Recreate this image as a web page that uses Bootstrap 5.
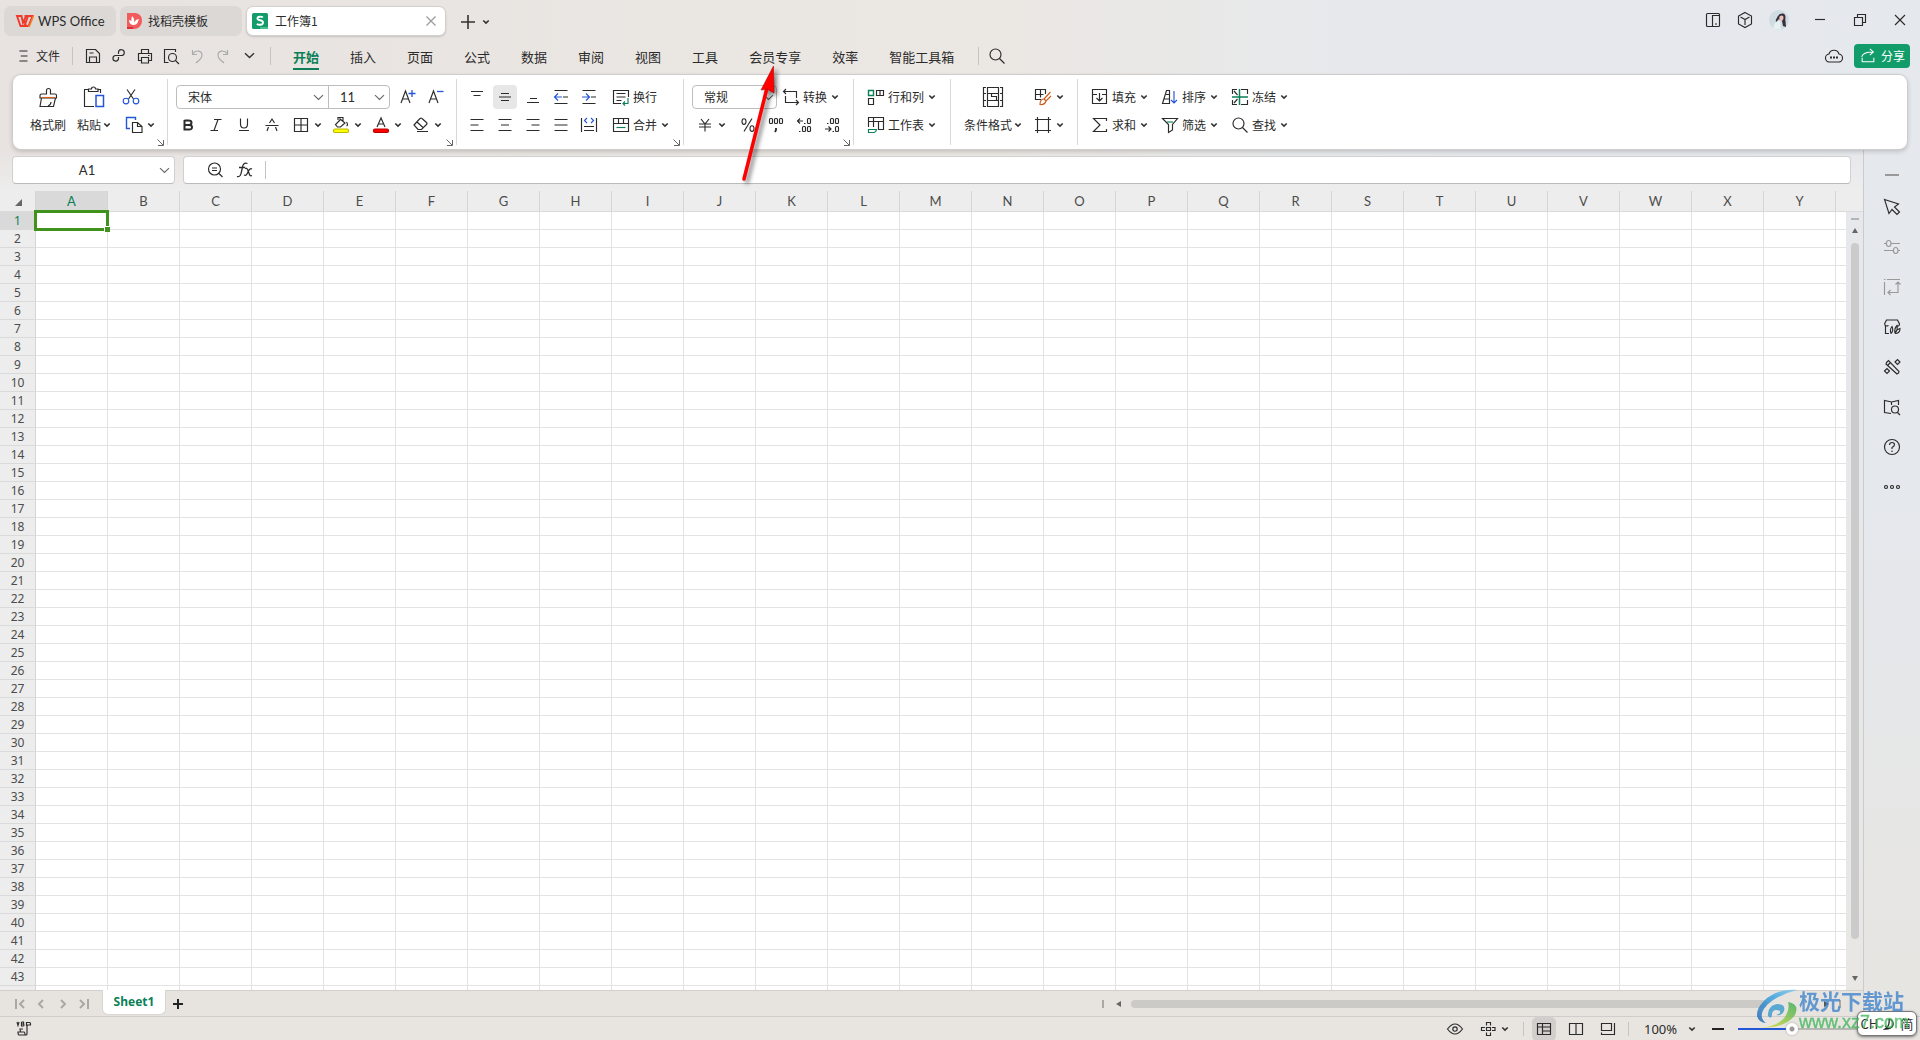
<!DOCTYPE html>
<html lang="zh-CN">
<head>
<meta charset="utf-8">
<meta name="viewport" content="width=device-width, initial-scale=1">
<title>工作簿1 - WPS Office</title>
<link href="https://cdn.jsdelivr.net/npm/bootstrap@5.3.0/dist/css/bootstrap.min.css" rel="stylesheet">
<style>
:root{--ink:#2b2b2b;--green:#0b7f57;--blue:#2456d8}
body{font:12px/16px "Noto Sans CJK SC",sans-serif;color:var(--ink);background:linear-gradient(90deg,#e8e3e0,#ebe7e3 52%,#e8e9ea 66%,#e6e8ed 76%,#e5e8ec)}
button{font:inherit;color:inherit;background:none;border:0;padding:0}
svg{display:block;flex:none}
.titlebar,.menubar,.ribbon,.statusbar,.fxbar,.sheetbar{flex-shrink:0}
main{flex:1 1 0;min-height:0}
.sheetrow{flex:1 1 0;min-height:0}
.ic{width:20px;height:20px;fill:none;stroke:var(--ink);stroke-width:1.15}
.caret{width:8px;height:8px;fill:none;stroke:#333;stroke-width:1.7}
.chev{width:11px;height:11px;fill:none;stroke:#666;stroke-width:1.1}
.titlebar{height:37px;padding:6px 0 0 4px}
.doctab{height:30px;border-radius:7px;background:#dcd8d5;font-size:12px;text-decoration:none;color:var(--ink)}
.latin{font-family:Lato,"Noto Sans CJK SC",sans-serif;font-size:13px}
.doctab.current{background:#fff;border:1px solid #d3d0ce;box-shadow:0 1px 2px rgba(0,0,0,.15)}
.winbtn{width:40px;height:28px}
.winbtn.avatar{width:36px;margin-right:3px}
.toolbtn{width:32px;height:28px}
.menubar{height:37px}
.qbtn{width:26px;height:26px}
.vsep{width:1px;height:18px;background:#c6c3c1}
.filebtn{width:72px;padding-left:14px;margin-right:0}
.filebtn+.vsep{margin-right:7px}
.menu-tabs{gap:31px;font-size:13px;line-height:20px;margin-left:22px}
.menu-tabs a{color:var(--ink);text-decoration:none;padding:5px 0 1px;border-bottom:2px solid transparent}
.menu-tabs a.current{color:var(--green);font-weight:700;border-color:var(--green)}
.cloud{margin-right:10px}
.share{width:56px;height:24px;margin-right:10px;border-radius:4px;background:#119c6a;color:#fff}
.ribbon{margin:0 12px;height:76px;background:#fff;border:1px solid #cfcdcc;border-radius:9px;box-shadow:0 2px 4px rgba(0,0,0,.16);z-index:2}
.rgroup{padding:8px 0 0 8px;position:relative}
.rgroup::after{content:"";position:absolute;right:0;top:4px;height:66px;width:1px;background:#d8d8d8}
.rgroup.tight{padding-left:6px}
.rgroup:last-child::after{display:none}
.rrow{height:28px}
.ibtn{width:28px;height:24px;border-radius:4px}
.ibtn.on{width:24px;margin:0 2px;background:#e7e7e7}
.split{width:40px;height:24px;gap:0}
.split .icbox{width:26px}
.tbtn{height:24px;padding-left:4px;gap:2px;white-space:nowrap}
.tbtn .caret{margin-left:2px}
.bigbtn{height:56px;width:46px;white-space:nowrap}
.bigbtn.wide{width:68px}
.bigbtn .pic{height:28px}
.bigbtn .cap{height:28px;gap:2px}
.launch{position:absolute;right:4px;bottom:3px;width:7px;height:7px;fill:none;stroke:#666}
.pick{position:relative}
.pick select{appearance:none;width:100%;height:24px;border:1px solid #bdbdbd;border-radius:4px;background:#fff;padding:0 0 0 11px;font:12px/20px "Noto Sans CJK SC",sans-serif;color:var(--ink)}
.pick svg{position:absolute;right:5px;top:7px;pointer-events:none}
.pick.fname{width:153px;margin-left:2px}
.pick.fname select{border-radius:4px 0 0 4px}
.pick.fsize{width:62px;margin-left:-1px}
.pick.fsize select{border-radius:0 4px 4px 0;font-family:Lato,sans-serif;font-size:13px}
.pick.fnum{width:85px}
.pick.fnum svg{right:3px}
.fxbar{height:41px;padding:6px 12px 6px 12px;gap:8px;background:linear-gradient(180deg,rgba(237,237,237,0),#ededed)}
.fbox{background:#fff;border:1px solid #d0d0d0;border-bottom-color:#bbb;border-radius:4px;height:28px}
.fbox input{border:0;outline:0;background:none;min-width:0;font:13px Lato,sans-serif;color:var(--ink)}
.sheetwrap{overflow:hidden;position:relative;background:#fff}
.gridtable{table-layout:fixed;border-collapse:separate;border-spacing:0;width:1908px;line-height:17px;color:#4c4c4c}
.gridtable th{font:13px/17px Lato,sans-serif;text-align:center;padding:0;background:#ededed;border-right:1px solid #d5d5d5;border-bottom:1px solid #dadada}
.gridtable thead th{height:21px;line-height:20px}
.gridtable tbody th{font:12px/17px "Noto Sans",sans-serif;height:18px}
.gridtable td{height:18px;padding:0;border-right:1px solid #e3e3e3;border-bottom:1px solid #e3e3e3;position:relative}
.gridtable th.hot{background:#d9d9d9;color:var(--green)}
.gridtable td.cursor::before{content:"";position:absolute;inset:-2px;border:3px solid #41911d;z-index:1}
.gridtable td.cursor::after{content:"";position:absolute;right:-3px;bottom:-3px;width:6px;height:6px;background:#41911d;border:solid #fff;border-width:1px 0 0 1px;z-index:2}
.vscroll{width:17px;padding:6px 0 7px}
.vcol{background:linear-gradient(180deg,#e6e8ec,#e8e7e4)}
.vhead{height:21px;background:#ededed;border-bottom:1px solid #dadada}
.vthumb{width:8px;margin:7px 0 36px;background:#cbcbcb;border-radius:4px}
.sidebar{width:57px;border-left:1px solid #c9cbce;background:linear-gradient(180deg,#e5e8ed,#e5e8ed 40%,#e7e5e1);padding-top:13px}
.sidebar button{height:40px;width:56px}
.sidebar .fold{height:26px}
.sheetbar{height:26px;background:#e7e4e0;border-top:1px solid #d2d0cd}
.sheetbar .nav-b{width:22px;height:24px}
.sheettab{margin-top:-1px;height:25px;width:64px;background:#fff;border-radius:0 0 6px 6px;border:1px solid #d8d5d2;border-top:0;color:var(--green);font:700 12px/24px "Noto Sans",sans-serif;text-align:center;text-decoration:none}
.hscroll{width:41%}
.hthumb{height:8px;margin-right:56px;background:#cccac7;border-radius:4px}
.statusbar{height:24px;background:#e8e5e1;border-top:1px solid #cfcccb;padding:0 10px 0 10px}
.statusbar .vsep{height:14px}
.stbtn{width:24px;height:24px;border-radius:5px}
.stbtn.on{background:#d1cecb}
.zoomv{width:56px;margin-left:11px;font:13px "Noto Sans",sans-serif;padding-left:4px}
.zslide{appearance:none;width:138px;height:12px;margin:0 6px;background:linear-gradient(#2456d8,#2456d8) 0 5px/53px 2px no-repeat,linear-gradient(#b9b7b5,#b9b7b5) 0 5px/100% 2px no-repeat}
.zslide::-webkit-slider-thumb{appearance:none;width:12px;height:12px;border-radius:50%;background:radial-gradient(#999 0 2px,#fff 3px);box-shadow:0 0 2px #888}
.callout{position:absolute;left:730px;top:56px;z-index:5;pointer-events:none;filter:drop-shadow(3px 3px 2px rgba(0,0,0,.5))}
.ime{position:absolute;right:3px;bottom:4px;width:60px;height:25px;border-radius:6px;background:#fff;border:1px solid #777;box-shadow:0 1px 3px rgba(0,0,0,.5);font:13px/22px "Noto Sans CJK SC",sans-serif;z-index:6}
.wmark{position:absolute;right:11px;bottom:8px;z-index:7;pointer-events:none;opacity:.78}
.wmark .cn{font:700 21px/24px "Noto Sans CJK SC",sans-serif;color:#3d83cb}
.wmark .en{font:18px/20px "Liberation Sans",sans-serif;-webkit-text-stroke:.4px #3fb558;color:#3fb558}
</style>
<script src="https://cdn.jsdelivr.net/npm/bootstrap@5.3.0/dist/js/bootstrap.bundle.min.js"></script>
</head>
<body>
<svg width="0" height="0" class="position-absolute" aria-hidden="true"><defs>
<symbol id="caret" viewBox="0 0 8 8"><path d="M1.3 2.5 4 5l2.7-2.5"/></symbol>
<symbol id="chev" viewBox="0 0 11 11"><path d="M1 3.2 5.5 7.5 10 3.2"/></symbol>
<symbol id="launch" viewBox="0 0 7 7"><path d="M.5.5 6 6M6.500 1v5.500H1"/></symbol>
<symbol id="mag" viewBox="0 0 20 20"><circle cx="8.500" cy="8.500" r="5.500"/><path d="m12.500 12.500 5 5"/></symbol>
<symbol id="al" viewBox="0 0 20 20"><path d="M3.500 4.500h13M3.500 10h8M3.500 15.500h13"/></symbol>
<symbol id="ac" viewBox="0 0 20 20"><path d="M3.500 4.500h13M6 10h8M3.500 15.500h13"/></symbol>
<symbol id="ar" viewBox="0 0 20 20"><path d="M3.500 4.500h13M8.500 10h8M3.500 15.500h13"/></symbol>
<symbol id="aj" viewBox="0 0 20 20"><path d="M3.500 4.500h13M3.500 10h13M3.500 15.500h13"/></symbol>
</defs></svg>
<div class="d-flex flex-column vh-100 overflow-hidden position-relative">

<header class="titlebar d-flex">
  <a href="#" class="doctab latin d-flex align-items-center me-1" style="width:112px"><svg class="ms-2" width="26" height="20" viewBox="0 0 26 20"><path d="M5 5h4.500l1.500 7 3-7h2l-3.500 10h-4zM12 9l2 6h2.500l4-10H12.500" fill="none" stroke="#f13a2b" stroke-width="1.900"/><path d="M16 15h1.500l4-10" fill="none" stroke="#f78322" stroke-width="1.500"/></svg>WPS Office</a>
  <a href="#" class="doctab d-flex align-items-center me-1" style="width:122px"><svg class="ms-1 me-1" width="20" height="20" viewBox="0 0 20 20"><path d="M3 2h8a7 7 0 0 1 7 7v1a8 8 0 0 1-8 8H3z" fill="#f25a5c"/><path d="M3 16h6v2H3z" fill="#d92f3b"/><path d="M10 14c-3-2-3-5-2-9 2 2 3 4 2 9m0 0c-3 0-5-2-5-5 3 1 5 2 5 5m0 0c3 0 4-3 5-6-3 0-5 3-5 6" fill="#fff"/></svg>找稻壳模板</a>
  <a href="#" class="doctab current d-flex align-items-center" style="width:200px"><svg class="ms-1 me-1" width="20" height="18" viewBox="0 0 20 18"><rect x="1" y="1" width="16" height="16" rx="1.500" fill="#119c6a"/><path d="M9 15h8v2H9z" fill="#45c08e"/><path d="M11.800 5.500C11 4.500 6.500 4 6.500 6.500S12 7.500 12 10.500s-5 2.700-6 1.200" fill="none" stroke="#fff" stroke-width="1.900"/></svg>工作簿1<svg class="ms-auto me-2" width="12" height="12" viewBox="0 0 12 12" stroke="#999" stroke-width="1.200"><path d="m1.500 1.500 9 9m0-9-9 9"/></svg></a>
  <button class="d-flex align-items-center ms-2 ps-1" aria-label="新建"><svg width="20" height="20" viewBox="0 0 20 20" stroke="#333" stroke-width="1.600"><path d="M3 10h14M10 3v14"/></svg></button>
  <button class="d-flex align-items-center ms-1" aria-label="标签列表"><svg class="caret"><use href="#caret"/></svg></button>
  <div class="ms-auto d-flex">
    <button class="toolbtn d-flex align-items-center justify-content-center" aria-label="侧栏"><svg class="ic" viewBox="0 0 20 20"><rect x="3.500" y="3.500" width="13" height="13" rx="1"/><path d="M9.500 16V5.500h7M12 14h2"/></svg></button>
    <button class="toolbtn d-flex align-items-center justify-content-center" aria-label="应用"><svg class="ic" viewBox="0 0 20 20"><path d="M10 2.500 16.500 6v8L10 17.500 3.500 14V6zM5.500 7 10 9.500 14.500 7M10 9.500V15"/></svg></button>
    <button class="winbtn avatar d-flex align-items-center justify-content-center" aria-label="账户"><svg width="20" height="20" viewBox="0 0 20 20"><circle cx="10" cy="10" r="10" fill="#cfdde2"/><path d="M5 19c-1-5 2-8 6-8l1 8.500z" fill="#e7f1f2"/><path d="M8 8c1-4 6-6 8-3 1 2 0 4 .5 6l.5 6-3-1-1-5-3-2-3 3c-.5-2 0-3 1-4" fill="#3a2e3c"/><path d="M10.500 6.500c2-2 4-1 4 1s-1 3.500-2.500 3.500-2-2-1.500-4.500" fill="#e8c4b8"/></svg></button>
    <button class="winbtn d-flex align-items-center justify-content-center" aria-label="最小化"><svg class="ic" viewBox="0 0 20 20"><path d="M5 9.500h10"/></svg></button>
    <button class="winbtn d-flex align-items-center justify-content-center" aria-label="还原"><svg class="ic" viewBox="0 0 20 20"><path d="M4.500 7.500h8v8h-8zM7.500 7.500v-3h8v8h-3"/></svg></button>
    <button class="winbtn d-flex align-items-center justify-content-center" aria-label="关闭"><svg class="ic" viewBox="0 0 20 20"><path d="m5 5 10 10M15 5 5 15"/></svg></button>
  </div>
</header>

<nav class="menubar d-flex align-items-center">
  <button class="filebtn d-flex align-items-center"><svg class="ic me-1" style="width:18px" viewBox="0 0 20 20"><path d="M6 4.500h9M7.500 10H15M6 15.500h9"/></svg>文件</button>
  <span class="vsep"></span>
  <button class="qbtn d-flex align-items-center justify-content-center" aria-label="保存"><svg class="ic" viewBox="0 0 20 20"><path d="M3.500 3.500h9l4 4v9h-13zM6.500 16v-5h7v5M6.500 7h4"/></svg></button>
  <button class="qbtn d-flex align-items-center justify-content-center" aria-label="输出"><svg class="ic" viewBox="0 0 20 20"><path d="M9.500 8V6.300A2.900 2.900 0 1 1 12.400 9.500H8M8 9.500H6.500a2.800 2.800 0 1 0 3 3.200V11"/></svg></button>
  <button class="qbtn d-flex align-items-center justify-content-center" aria-label="打印"><svg class="ic" viewBox="0 0 20 20"><path d="M6.500 7V3.500h7V7M6 14.500H3.500v-7h13v7H14M6.500 11.500h7v5.500h-7zM13 9.500h1.500"/></svg></button>
  <button class="qbtn d-flex align-items-center justify-content-center" aria-label="预览"><svg class="ic" viewBox="0 0 20 20"><path d="M14.500 6V3.500h-11v13h4M14.500 14.500l3.500 3.500"/><circle cx="11.500" cy="11.500" r="4"/></svg></button>
  <button class="qbtn d-flex align-items-center justify-content-center" aria-label="撤销"><svg class="ic" style="stroke:#aaa" viewBox="0 0 20 20"><path d="M5.500 4v4.500H10M5.500 8C9 3 15 5 15 9s-4 6-6 8"/></svg></button>
  <button class="qbtn d-flex align-items-center justify-content-center" aria-label="恢复"><svg class="ic" style="stroke:#aaa" viewBox="0 0 20 20"><path d="M14.500 4v4.500H10M14.500 8C11 3 5 5 5 9s4 6 6 8"/></svg></button>
  <button class="qbtn d-flex align-items-center justify-content-center" aria-label="更多"><svg class="chev" style="stroke:#333;stroke-width:1.400"><use href="#chev"/></svg></button>
  <span class="vsep ms-2"></span>
  <div class="menu-tabs d-flex">
    <a href="#" class="current">开始</a><a href="#">插入</a><a href="#">页面</a><a href="#">公式</a><a href="#">数据</a><a href="#">审阅</a><a href="#">视图</a><a href="#">工具</a><a href="#">会员专享</a><a href="#">效率</a><a href="#">智能工具箱</a>
  </div>
  <span class="vsep ms-4"></span>
  <button class="d-flex ms-2" aria-label="搜索"><svg class="ic"><use href="#mag"/></svg></button>
  <button class="cloud d-flex ms-auto" aria-label="云同步"><svg class="ic" viewBox="0 0 20 20"><path d="M6 16a4 4 0 0 1-1-8 5.200 5.200 0 0 1 10 0 4 4 0 0 1-1 8z"/><path d="M6 11.500h2m1 0h2m1 0h2" stroke-width="1.800"/></svg></button>
  <button class="share d-flex align-items-center justify-content-center"><svg class="ic me-1" style="stroke:#fff;width:18px" viewBox="0 0 20 20"><path d="M3 11c1-4 5-5.500 12-5.500M12 2l4 3.500L12 9M3.500 12v4.500h13V12"/></svg>分享</button>
</nav>

<section class="ribbon d-flex position-relative">
  <div class="rgroup d-flex" style="width:155px;padding-left:12px">
    <button class="bigbtn"><span class="pic d-flex align-items-center justify-content-center"><svg class="ic" style="width:22px;height:22px" viewBox="0 0 22 22"><path d="M9.500 8V4.500a2 2 0 1 1 4 0V8h4.500q1.500 0 1.500 1.500V12H3V9.500Q3 8 4.500 8zM4.500 12 3 20.500h13.500l2-8.500M11 20q3-1 3-4"/><path d="M5 11.500h13" stroke="#d2601e"/></svg></span><span class="cap d-flex align-items-center justify-content-center">格式刷</span></button>
    <button class="bigbtn"><span class="pic d-flex align-items-center justify-content-center"><svg class="ic" style="width:22px;height:22px" viewBox="0 0 22 22"><path d="M6 3.500H1.500v17H11M14.500 3.500h3V7M5.500 5.500V3h3q0-2 2-2t2 2H15v2.500z"/><path d="M13 9.500h7.500v11H13z" stroke="#2456d8" stroke-width="1.500"/></svg></span><span class="cap d-flex align-items-center justify-content-center">粘贴<svg class="caret"><use href="#caret"/></svg></span></button>
    <div>
      <div class="rrow d-flex align-items-center"><button class="ibtn d-flex align-items-center justify-content-center" aria-label="剪切"><svg class="ic" viewBox="0 0 20 20"><path d="M6 2.500 12.500 12M14 2.500 7.500 12"/><g stroke="#2456d8"><circle cx="5" cy="14" r="2.800"/><circle cx="15" cy="14" r="2.800"/></g></svg></button></div>
      <div class="rrow d-flex align-items-center"><button class="split d-flex align-items-center" aria-label="复制"><span class="icbox d-flex justify-content-center ms-1"><svg class="ic" viewBox="0 0 20 20"><path d="M8.500 7.500h5l4.500 4v6H8.500zM13.500 8v3.500H18"/><path d="M6 13.500H2.500v-11h9V5" stroke="#2456d8" stroke-width="1.400"/></svg></span><svg class="caret"><use href="#caret"/></svg></button></div>
    </div>
    <svg class="launch"><use href="#launch"/></svg>
  </div>

  <div class="rgroup tight" style="width:289px">
    <div class="rrow d-flex align-items-center">
      <div class="pick fname"><select aria-label="字体"><option>宋体</option></select><svg class="chev"><use href="#chev"/></svg></div>
      <div class="pick fsize me-1"><select aria-label="字号"><option>11</option></select><svg class="chev"><use href="#chev"/></svg></div>
      <button class="ibtn d-flex align-items-center justify-content-center" aria-label="增大字号"><svg class="ic" viewBox="0 0 20 20"><path d="m3 16 4.500-12L12 16M4.500 12h6"/><path d="M10.500 6.500h7M14 3v7" stroke="#2456d8" stroke-width="1.300"/></svg></button>
      <button class="ibtn d-flex align-items-center justify-content-center" aria-label="减小字号"><svg class="ic" viewBox="0 0 20 20"><path d="m3 16 4.500-12L12 16M4.500 12h6"/><path d="M11 4.500h6.500" stroke="#2456d8" stroke-width="1.300"/></svg></button>
    </div>
    <div class="rrow d-flex align-items-center">
      <button class="ibtn d-flex align-items-center justify-content-center" aria-label="加粗"><svg class="ic" style="stroke-width:2" viewBox="0 0 20 20"><path d="M6.500 5.500h4q3 0 3 2.200t-3 2.300h-4M6.500 10h4.500q3 0 3 2.300t-3 2.200H6.500zM6.500 5v10"/></svg></button>
      <button class="ibtn d-flex align-items-center justify-content-center" aria-label="倾斜"><svg class="ic" viewBox="0 0 20 20"><path d="M8 4.500h7.500M4.500 15.500H12M12 4.500l-4 11"/></svg></button>
      <button class="ibtn d-flex align-items-center justify-content-center" aria-label="下划线"><svg class="ic" viewBox="0 0 20 20"><path d="M6.500 3.500V9q0 4 3.500 4t3.500-4V3.500M5 15.500h10"/></svg></button>
      <button class="ibtn d-flex align-items-center justify-content-center" aria-label="删除线"><svg class="ic" viewBox="0 0 20 20"><path d="M7.500 8 10 4l2.500 4M3.500 10.500h13M6.500 12 5 16M13.500 12l1.500 4"/></svg></button>
      <button class="split d-flex align-items-center" style="margin-left:2px" aria-label="边框"><span class="icbox d-flex justify-content-center"><svg class="ic" viewBox="0 0 20 20"><path d="M3.500 3.500h13v13h-13zM10 3.500v13M3.500 10h13"/></svg></span><svg class="caret"><use href="#caret"/></svg></button>
      <button class="split d-flex align-items-center" aria-label="填充颜色"><span class="icbox d-flex justify-content-center"><svg class="ic" viewBox="0 0 20 20"><path d="M8.500 3.500 14 8l-4.500 4h-3L4.500 9.500l5-5M7 5V2.500h5V6M15.500 7q2 3 0 4"/><rect x="2.500" y="14" width="15" height="3.500" rx="1.500" fill="#ff0" stroke="#bdb800"/></svg></span><svg class="caret"><use href="#caret"/></svg></button>
      <button class="split d-flex align-items-center" aria-label="字体颜色"><span class="icbox d-flex justify-content-center"><svg class="ic" viewBox="0 0 20 20"><path d="m6 12 4-9 4 9M7.500 9h5"/><rect x="2.500" y="14" width="15" height="3.500" rx="1.500" fill="#f00" stroke="#b80000"/></svg></span><svg class="caret"><use href="#caret"/></svg></button>
      <button class="split d-flex align-items-center" aria-label="清除"><span class="icbox d-flex justify-content-center"><svg class="ic" viewBox="0 0 20 20"><path d="m3 10 6-6.500q1-1 2 0l4.500 4q1 1 0 2l-5 5H7zM6 7l6 5.500M6 16.500h11"/></svg></span><svg class="caret"><use href="#caret"/></svg></button>
    </div>
    <svg class="launch"><use href="#launch"/></svg>
  </div>

  <div class="rgroup tight" style="width:227px">
    <div class="rrow d-flex align-items-center">
      <button class="ibtn d-flex align-items-center justify-content-center" aria-label="顶端对齐"><svg class="ic" viewBox="0 0 20 20"><path d="M4 4.500h12M6.500 8.500h7"/></svg></button>
      <button class="ibtn on d-flex align-items-center justify-content-center" aria-label="垂直居中"><svg class="ic" viewBox="0 0 20 20"><path d="M6 6.500h8M4 10h12M6 13.500h8"/></svg></button>
      <button class="ibtn d-flex align-items-center justify-content-center" aria-label="底端对齐"><svg class="ic" viewBox="0 0 20 20"><path d="M7 11.500h7M4 15.500h12"/></svg></button>
      <button class="ibtn d-flex align-items-center justify-content-center" aria-label="减少缩进"><svg class="ic" viewBox="0 0 20 20"><path d="M3.500 3.500h13M12 10h5M3.500 16.500h13"/><path d="M11 10H4M7 6.500 3.500 10 7 13.500" stroke="#2456d8"/></svg></button>
      <button class="ibtn d-flex align-items-center justify-content-center" aria-label="增加缩进"><svg class="ic" viewBox="0 0 20 20"><path d="M3.500 3.500h13M12 10h5M3.500 16.500h13"/><path d="M3 10h7M7 6.500l3.500 3.500L7 13.500" stroke="#2456d8"/></svg></button>
      <button class="tbtn ms-1 d-flex align-items-center"><svg class="ic" viewBox="0 0 20 20"><path d="M10 16.500H2.500v-13h15V10M5.500 6.500h9M5.500 10h9M5.500 13.500h5"/><path d="M17 11v5.500h-5m2-2-2 2 2 2" stroke="#0b7f57"/></svg>换行</button>
    </div>
    <div class="rrow d-flex align-items-center">
      <button class="ibtn d-flex align-items-center justify-content-center" aria-label="左对齐"><svg class="ic"><use href="#al"/></svg></button>
      <button class="ibtn d-flex align-items-center justify-content-center" aria-label="水平居中"><svg class="ic"><use href="#ac"/></svg></button>
      <button class="ibtn d-flex align-items-center justify-content-center" aria-label="右对齐"><svg class="ic"><use href="#ar"/></svg></button>
      <button class="ibtn d-flex align-items-center justify-content-center" aria-label="两端对齐"><svg class="ic"><use href="#aj"/></svg></button>
      <button class="ibtn d-flex align-items-center justify-content-center" aria-label="分散对齐"><svg class="ic" viewBox="0 0 20 20"><path d="M2.500 3v14M17.500 3v14M5 11.500h10M5 15.500h10"/><path d="M8 3 5.500 5.500 8 8M12 3l2.500 2.500L12 8" stroke="#2456d8"/></svg></button>
      <button class="tbtn ms-1 d-flex align-items-center"><svg class="ic" viewBox="0 0 20 20"><path d="M2.500 3.500h15v13h-15zM2.500 8.500h15M7.500 3.500v5M12.500 3.500v5"/><path d="M5.500 12.500h9" stroke="#0b7f57"/></svg>合并<svg class="caret"><use href="#caret"/></svg></button>
    </div>
    <svg class="launch"><use href="#launch"/></svg>
  </div>

  <div class="rgroup" style="width:170px">
    <div class="rrow d-flex align-items-center">
      <div class="pick fnum"><select aria-label="数字格式"><option>常规</option></select><svg class="chev"><use href="#chev"/></svg></div>
      <button class="tbtn d-flex align-items-center"><svg class="ic" viewBox="0 0 20 20"><path d="M5 2 2.500 4.500 5 7M3 4.500h12.500V11M15 13l2.500 2.500L15 18M17 15.500H4.500V9"/></svg>转换<svg class="caret"><use href="#caret"/></svg></button>
    </div>
    <div class="rrow d-flex align-items-center">
      <button class="split d-flex align-items-center" aria-label="货币"><span class="icbox d-flex justify-content-center"><svg class="ic" viewBox="0 0 20 20"><path d="m6 4 4 5 4-5M4 9h12M4 12h12M10 9v7.500"/></svg></span><svg class="caret"><use href="#caret"/></svg></button>
      <button class="ibtn d-flex align-items-center justify-content-center" style="margin-left:2px" aria-label="百分比"><svg class="ic" viewBox="0 0 20 20"><path d="M14 3.500 6 16.500"/><ellipse cx="6" cy="6.500" rx="2" ry="2.800"/><ellipse cx="14" cy="13.500" rx="2" ry="2.800"/></svg></button>
      <button class="ibtn d-flex align-items-center justify-content-center" aria-label="千位分隔"><svg class="ic" viewBox="0 0 20 20"><rect x="3.500" y="3.500" width="3" height="5" rx="1"/><rect x="8.500" y="3.500" width="3" height="5" rx="1"/><rect x="13.500" y="3.500" width="3" height="5" rx="1"/><path d="M10 13v2l-1 2" stroke-width="1.800"/></svg></button>
      <button class="ibtn d-flex align-items-center justify-content-center" aria-label="增加小数位"><svg class="ic" viewBox="0 0 20 20"><path d="M6 3.500 3.500 6 6 8.500M3.500 6H9M10 8.500h1.500M5 16.500h1.500"/><rect x="13.500" y="3.500" width="3" height="5" rx="1"/><rect x="8.500" y="11.500" width="3" height="5" rx="1"/><rect x="13.500" y="11.500" width="3" height="5" rx="1"/></svg></button>
      <button class="ibtn d-flex align-items-center justify-content-center" aria-label="减少小数位"><svg class="ic" viewBox="0 0 20 20"><path d="M6.500 11.500 9 14l-2.500 2.500M9 14H3M10.500 16.500H12M5 8.500h1.500"/><rect x="8.500" y="3.500" width="3" height="5" rx="1"/><rect x="13.500" y="3.500" width="3" height="5" rx="1"/><rect x="13.500" y="11.500" width="3" height="5" rx="1"/></svg></button>
    </div>
    <svg class="launch"><use href="#launch"/></svg>
  </div>

  <div class="rgroup" style="width:97px">
    <div class="rrow d-flex align-items-center"><button class="tbtn d-flex align-items-center"><svg class="ic" viewBox="0 0 20 20"><path d="M10.500 3.500h7v5h-7zM14 3.500v5M2.500 11.500h5v6h-5z"/><path d="M2.500 3.500h5v5h-5z" stroke="#0b7f57" stroke-width="1.400"/></svg>行和列<svg class="caret"><use href="#caret"/></svg></button></div>
    <div class="rrow d-flex align-items-center"><button class="tbtn d-flex align-items-center"><svg class="ic" viewBox="0 0 20 20"><path d="M2.500 12V2.500h15v12H12M2.500 6.500h15M7.500 2.500V12M12.500 6.500v8"/><path d="M2.500 14.500h8q-.500 3-3 3h-5z" stroke="#0b7f57"/></svg>工作表<svg class="caret"><use href="#caret"/></svg></button></div>
  </div>

  <div class="rgroup d-flex" style="width:127px">
    <button class="bigbtn wide"><span class="pic d-flex align-items-center justify-content-center"><svg class="ic" style="width:22px;height:22px" viewBox="0 0 22 22"><path d="M4 1.500H1.500v19H4M18 1.500h2.500v19H18M5.500 1.500h11v19h-11zM5.500 7.500h11M5.500 14.500h11M1.500 7.500H4M1.500 14.500H4M18 7.500h2.500M18 14.500h2.500M9.500 7.500v3h5v4"/></svg></span><span class="cap d-flex align-items-center justify-content-center">条件格式<svg class="caret"><use href="#caret"/></svg></span></button>
    <div style="margin-left:3px">
      <div class="rrow d-flex align-items-center"><button class="split d-flex align-items-center" aria-label="表格样式"><span class="icbox d-flex justify-content-center"><svg class="ic" viewBox="0 0 20 20"><path d="M8 12.500H2.500v-10h10V7M2.500 7.500h8M7.500 2.500v8"/><path d="m17.500 5-6.500 7 2 2 5-5M11 12q-4 0-4 5.500 5 .500 6-3.500" stroke="#cf5a18"/></svg></span><svg class="caret"><use href="#caret"/></svg></button></div>
      <div class="rrow d-flex align-items-center"><button class="split d-flex align-items-center" aria-label="单元格"><span class="icbox d-flex justify-content-center"><svg class="ic" viewBox="0 0 20 20"><path d="M4.500 2v16M15.500 2v16M2 4.500h16M2 15.500h16"/></svg></span><svg class="caret"><use href="#caret"/></svg></button></div>
    </div>
  </div>

  <div class="rgroup">
    <div class="rrow d-flex align-items-center gap-2">
      <button class="tbtn d-flex align-items-center"><svg class="ic" viewBox="0 0 20 20"><path d="M7 7.500H2.500v-5h14v5H12M2.500 7.500v9h14v-9M9.500 6v8M6.500 11l3 3 3-3"/></svg>填充<svg class="caret"><use href="#caret"/></svg></button>
      <button class="tbtn d-flex align-items-center"><svg class="ic" viewBox="0 0 20 20"><path d="m2.500 16.500 4-13h3v13zM6 7.500h3.500M4.500 12h5"/><path d="M14 4v12M11 13l3 3 3-3" stroke="#2456d8"/></svg>排序<svg class="caret"><use href="#caret"/></svg></button>
      <button class="tbtn d-flex align-items-center"><svg class="ic" viewBox="0 0 20 20"><path d="M2.500 7V2.500H7M11 2.500h6.500V7M17.500 13v4.500H11M7 17.500H2.500V13M4 4l3.500 4M4 16l3.500-4"/><path d="M2 10h16M9.500 2v16" stroke="#0b7f57" stroke-width="1.500"/></svg>冻结<svg class="caret"><use href="#caret"/></svg></button>
    </div>
    <div class="rrow d-flex align-items-center gap-2">
      <button class="tbtn d-flex align-items-center"><svg class="ic" viewBox="0 0 20 20"><path d="M16.500 6V3.500h-13L10 10l-6.500 6.500h13V14"/></svg>求和<svg class="caret"><use href="#caret"/></svg></button>
      <button class="tbtn d-flex align-items-center"><svg class="ic" viewBox="0 0 20 20"><path d="M2.500 3.500h15l-5 6V15l-4 2.500v-8z"/><path d="M7 7h6" stroke="#0b7f57"/></svg>筛选<svg class="caret"><use href="#caret"/></svg></button>
      <button class="tbtn d-flex align-items-center"><svg class="ic"><use href="#mag"/></svg>查找<svg class="caret"><use href="#caret"/></svg></button>
    </div>
  </div>
</section>

<main class="d-flex">
  <div class="d-flex flex-column flex-grow-1" style="min-width:0">
    <div class="fxbar d-flex">
      <div class="fbox d-flex align-items-center" style="width:163px"><input class="flex-grow-1 text-center ps-1" value="A1" aria-label="名称框"><svg class="chev me-1"><use href="#chev"/></svg></div>
      <div class="fbox d-flex align-items-center flex-grow-1" style="padding-left:21px"><svg class="ic" viewBox="0 0 20 20"><circle cx="9.500" cy="9" r="6"/><path d="m14 13.500 3.500 3.500M7 8h5M7 10.500h5"/></svg><svg class="ic ms-2 me-2" style="width:24px" viewBox="0 0 24 20"><path d="M4 16.500c3 1 4-2 4.500-5L9.500 7c.500-3 2-4.500 5-3.500M6 7.500h6M12 8.500q2-1 3 2l1.500 4q.500 2 2.500 1M19 9q-2-1-3.500 2l-1.500 3q-1 2-3 1" stroke-width="1.300"/></svg><span class="vsep"></span><input class="flex-grow-1 ms-2" aria-label="编辑栏"></div>
    </div>
    <div class="sheetrow d-flex">
      <div class="sheetwrap flex-grow-1"><table class="gridtable" id="grid"><thead></thead><tbody></tbody></table></div>
      <div class="vcol d-flex flex-column"><div class="vhead"></div>
        <div class="vscroll flex-grow-1 d-flex flex-column align-items-center"><svg width="8" height="18" viewBox="0 0 8 18"><path d="M0 0h8v2H0z" fill="#b3b5b7"/><path d="m1 15 3-5 3 5z" fill="#666"/></svg><div class="vthumb flex-grow-1"></div><svg width="8" height="8" viewBox="0 0 8 8"><path d="m1 1 3 5 3-5z" fill="#666"/></svg></div>
      </div>
    </div>
    <div class="sheetbar d-flex align-items-center">
      <div class="d-flex ps-2" style="width:102px">
        <button class="nav-b" aria-label="第一个"><svg width="22" height="16" viewBox="0 0 22 16" fill="none" stroke="#aaa7a4" stroke-width="2"><path d="M8 3v10M16 4l-4 4 4 4"/></svg></button>
        <button class="nav-b" aria-label="上一个"><svg width="22" height="16" viewBox="0 0 22 16" fill="none" stroke="#aaa7a4" stroke-width="2"><path d="m13 4-4 4 4 4"/></svg></button>
        <button class="nav-b" aria-label="下一个"><svg width="22" height="16" viewBox="0 0 22 16" fill="none" stroke="#aaa7a4" stroke-width="2"><path d="m9 4 4 4-4 4"/></svg></button>
        <button class="nav-b" aria-label="最后一个"><svg width="22" height="16" viewBox="0 0 22 16" fill="none" stroke="#aaa7a4" stroke-width="2"><path d="m6 4 4 4-4 4M14 3v10"/></svg></button>
      </div>
      <a href="#" class="sheettab align-self-start">Sheet1</a>
      <button class="d-flex ms-1" aria-label="新建工作表"><svg width="16" height="16" viewBox="0 0 16 16" stroke="#222" stroke-width="2"><path d="M3 8h10M8 3v10"/></svg></button>
      <div class="hscroll ms-auto d-flex align-items-center"><svg width="32" height="12" viewBox="0 0 32 12"><path d="M3 2h2v8H3z" fill="#aaa7a4"/><path d="m22 3-5 3 5 3z" fill="#666"/></svg><div class="hthumb flex-grow-1"></div><svg width="40" height="12" viewBox="0 0 40 12"><path d="m1 3 5 3-5 3z" fill="#555"/><path d="M16 2h2v8h-2z" fill="#aaa7a4"/></svg></div>
    </div>
  </div>
  <aside class="sidebar d-flex flex-column">
    <button class="fold d-flex justify-content-center" aria-label="收起"><svg width="16" height="20" viewBox="0 0 16 20"><path d="M1 11h14v2H1z" fill="#999"/></svg></button>
    <button class="d-flex justify-content-center pt-2" aria-label="选择"><svg class="ic" viewBox="0 0 20 20"><path d="m2.500 2.500 14 4.500-4 3 5 5-2.500 2.500-5-5-3 4z"/></svg></button>
    <button class="d-flex justify-content-center pt-2" aria-label="属性"><svg class="ic" style="stroke:#999" viewBox="0 0 20 20"><path d="M2 6.500h2.500m4.500 0h9M2 13.500h9.500m4.500 0h2"/><ellipse cx="6.700" cy="6.500" rx="2.300" ry="3"/><ellipse cx="13.700" cy="13.500" rx="2.300" ry="3"/></svg></button>
    <button class="d-flex justify-content-center pt-2" aria-label="分析"><svg class="ic" style="stroke:#999" viewBox="0 0 20 20"><path d="M2 2.500h1.500M5 2.500h13M2.500 5v13M16 5v10.500H6M13.500 7.500 16 5l2.500 2.500M8.500 13 6 15.500 8.500 18"/></svg></button>
    <button class="d-flex justify-content-center pt-2" aria-label="模板"><svg class="ic" viewBox="0 0 20 20"><path d="M3.500 9v7.500H7M2.500 7l2-4h11l2 4q0 2.500-3 2M2.500 7q1 3 4 1.500M9 16.500q-1.500-4 1-7 2 4-1 7M13 16.500q-1-5 2-8 1 4-2 8m0 0q1-4 5-5 0 5-5 5"/></svg></button>
    <button class="d-flex justify-content-center pt-2" aria-label="工具"><svg class="ic" viewBox="0 0 20 20"><path d="m4.500 5.500 2-2L17 14.500q0 2-2 2.500L4 7zM6 8l2-2M2.500 14 5 11.500 7.500 14 5 16.500zM13 5l2.500-2.500L18 5l-2.500 2.500z"/></svg></button>
    <button class="d-flex justify-content-center pt-2" aria-label="查阅"><svg class="ic" viewBox="0 0 20 20"><path d="M9 16.500 2.500 15.500V3.500L9.500 5l7-1.500V8M9.500 5v3M15.500 15.500 18 18"/><circle cx="13" cy="12.500" r="3.500"/></svg></button>
    <button class="d-flex justify-content-center pt-2" aria-label="帮助"><svg class="ic" viewBox="0 0 20 20"><circle cx="10" cy="10" r="7.500"/><path d="M7.500 8q0-2.500 2.500-2.500t2.500 2.200q0 1.300-2.500 2.800V12M10 13.500V15"/></svg></button>
    <button class="d-flex justify-content-center pt-2" aria-label="更多"><svg class="ic" viewBox="0 0 20 20"><circle cx="4" cy="10" r="1.500"/><circle cx="10" cy="10" r="1.500"/><circle cx="16" cy="10" r="1.500"/></svg></button>
  </aside>
</main>

<footer class="statusbar d-flex align-items-center">
  <button aria-label="宏"><svg class="ic" style="width:28px" viewBox="0 0 28 20"><path d="m7 3 1 3.500L9 3M11.500 3v4h1.500q1 0 1-1t-1-1h-1.500M13 5q1 0 .500-2h-2M16.500 7V3.500h3q1 0 1 1v1.500h-3.500v9q0 1-1.500 1H9q-1 0-1-3h6q1 0 1 3M10.500 13l-.500-3h3"/></svg></button>
  <button class="stbtn ms-auto d-flex align-items-center justify-content-center" aria-label="护眼"><svg class="ic" viewBox="0 0 20 20"><path d="M2.500 10q7.500-10 15 0-7.500 10-15 0z"/><circle cx="10" cy="10" r="2.200"/></svg></button>
  <button class="split ms-2 d-flex align-items-center" aria-label="阅读模式"><span class="icbox d-flex justify-content-center"><svg class="ic" viewBox="0 0 20 20"><path d="M8.500 6.500v-3h4v3M8.500 13.500v3h4v-3M7 8.500H3.500v3H7M14 8.500h3v3h-3M8.500 8.500h4v3h-4z"/></svg></span><svg class="caret"><use href="#caret"/></svg></button>
  <span class="vsep ms-2 me-2"></span>
  <button class="stbtn on d-flex align-items-center justify-content-center me-2" aria-label="普通视图"><svg class="ic" viewBox="0 0 20 20"><path d="M3.500 4.500h13v11h-13zM3.500 8h13M8.500 4.500v11M8.500 12h8"/></svg></button>
  <button class="stbtn d-flex align-items-center justify-content-center me-2" aria-label="分页预览"><svg class="ic" viewBox="0 0 20 20"><path d="M3.500 4.500h13v11h-13zM10 4.500v11"/></svg></button>
  <button class="stbtn d-flex align-items-center justify-content-center me-2" aria-label="页面布局"><svg class="ic" viewBox="0 0 20 20"><path d="M3.500 4.500h10v7h-10zM16.500 4v11.500h-13v-2"/></svg></button>
  <span class="vsep"></span>
  <button class="zoomv d-flex align-items-center justify-content-between me-2">100%<svg class="caret"><use href="#caret"/></svg></button>
  <button class="ibtn d-flex align-items-center justify-content-center" aria-label="缩小"><svg width="12" height="12" viewBox="0 0 12 12"><path d="M0 5h12v2H0z" fill="#222"/></svg></button>
  <input type="range" class="zslide" min="0" max="100" value="38" aria-label="缩放">
  <button class="ibtn d-flex align-items-center justify-content-center" aria-label="放大"><svg width="12" height="12" viewBox="0 0 12 12"><path d="M0 5h12v2H0zM5 0h2v12H5z" fill="#222"/></svg></button>
</footer>

<svg class="callout" width="60" height="136" viewBox="0 0 60 136"><path d="M14 123 37 32" stroke="#f00" stroke-width="3.500" stroke-linecap="round"/><path d="M43.500 10 31 34l6-1 7 4z" fill="#f00" stroke="#b00000" stroke-width=".600"/></svg>
<div class="ime d-flex align-items-center justify-content-around"><span>CH</span><svg width="12" height="14" viewBox="0 0 12 14" fill="none" stroke="#222" stroke-width="1.300"><path d="M6 2q5 2 4 6t-8 4q5-3 4-10M2 9l3 2"/></svg><span>简</span></div>
<div class="wmark d-flex align-items-center">
  <svg width="44" height="44" viewBox="0 0 44 44"><defs><linearGradient id="wb" x1="1" y1="0" x2="0" y2="1"><stop offset="0" stop-color="#8ccdec"/><stop offset=".4" stop-color="#2d9fe0"/><stop offset="1" stop-color="#1b5fae"/></linearGradient><linearGradient id="wg" x1="1" y1="0" x2="0" y2="1"><stop offset="0" stop-color="#2fa84f"/><stop offset="1" stop-color="#e4e12d"/></linearGradient></defs><path d="M43 2C20-1 1 15 2 28q2 7 9 7Q2 28 12 17 24 6 43 2z" fill="url(#wb)"/><path d="M13 28q-1-10 9-12 9 0 7 7-2 5-8 4 5-1 4-4-7-3-8 3 0 6-4 2z" fill="#3498cf"/><path d="M33 14q12 2 7 13Q31 40 5 40q18-2 25-11 5-8 3-15z" fill="url(#wg)"/></svg>
  <div><div class="cn">极光下载站</div><div class="en">www.xz7.com</div></div>
</div>
</div>
<script>
const letters = 'ABCDEFGHIJKLMNOPQRSTUVWXY'.split('').concat('');
const grid = document.getElementById('grid');
grid.tHead.innerHTML = '<tr><th style="width:36px"><svg width="7" height="7" viewBox="0 0 7 7" style="margin:3px 0 0 15px"><path d="M7 0v7H0z" fill="#666"/></svg></th>' +
  letters.map((l, i) => `<th scope="col" style="width:72px"${i ? '' : ' class="hot"'}>${l}</th>`).join('') + '</tr>';
let rows = '';
for (let r = 1; r <= 44; r++) {
  rows += `<tr><th scope="row"${r > 1 ? '' : ' class="hot"'}>${r < 44 ? r : ''}</th>` +
    letters.map((l, i) => r === 1 && i === 0 ? '<td class="cursor"></td>' : '<td></td>').join('') + '</tr>';
}
grid.tBodies[0].innerHTML = rows;
</script>
</body>
</html>
